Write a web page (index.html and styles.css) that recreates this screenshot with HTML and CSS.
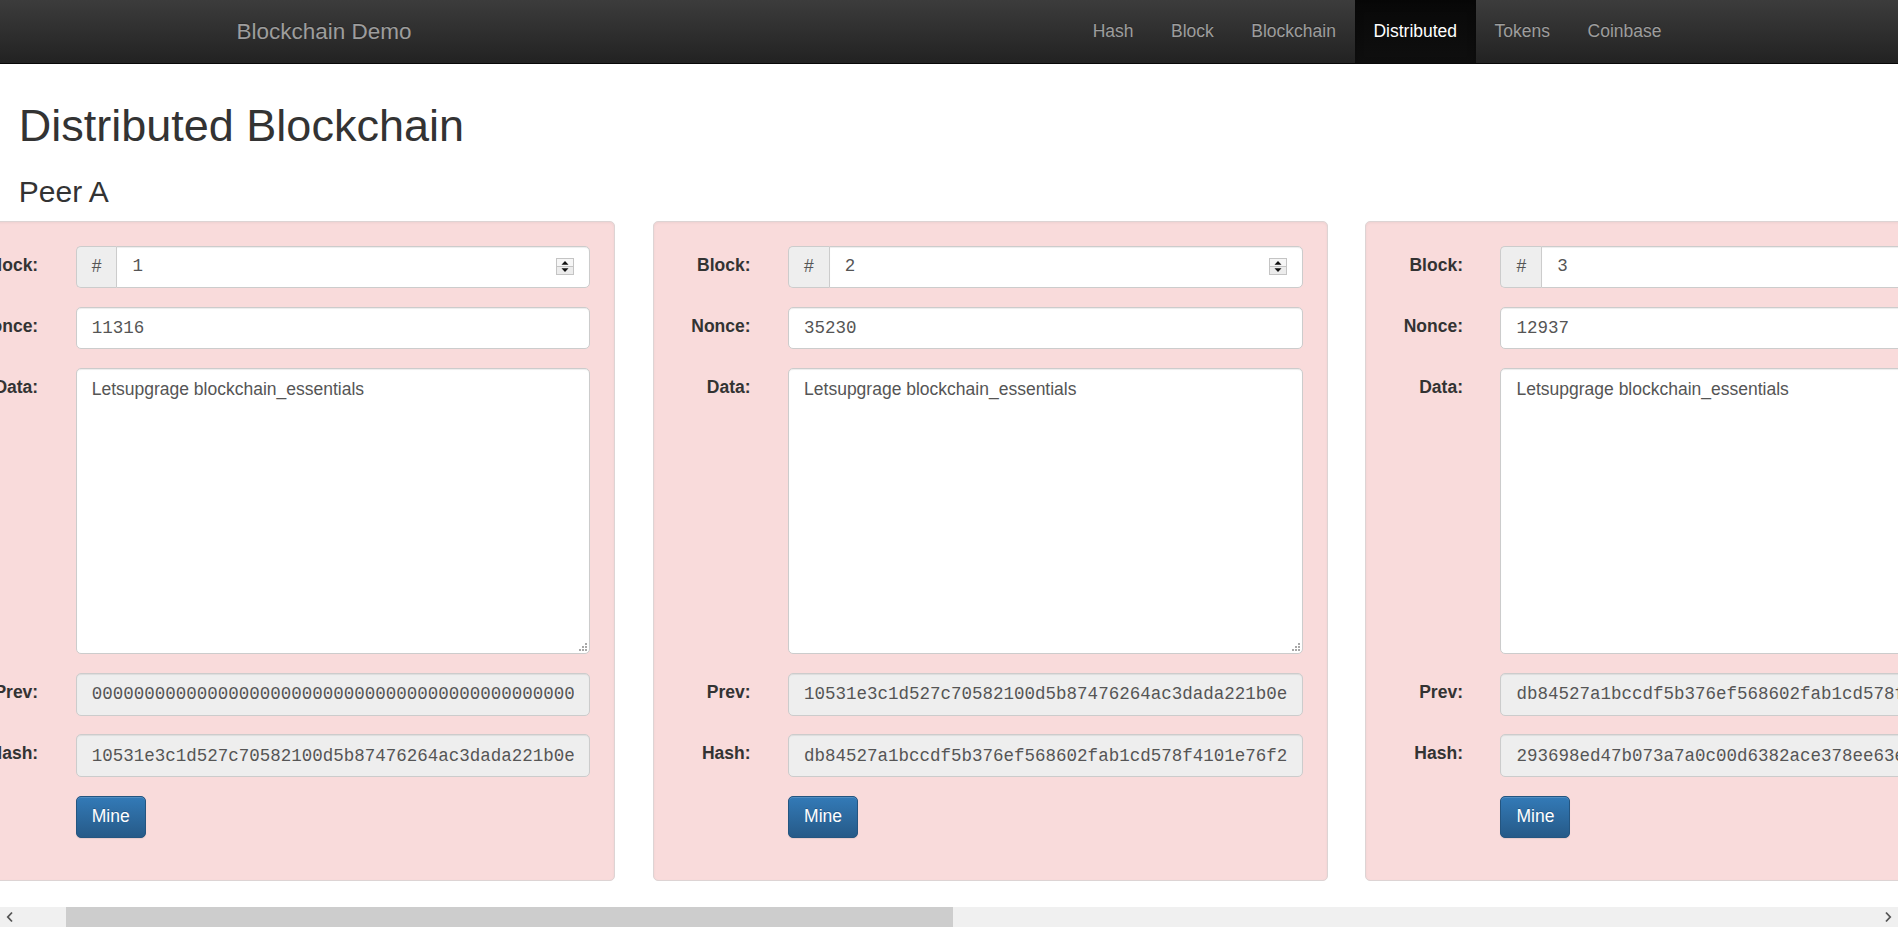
FILE: index.html
```html
<!DOCTYPE html>
<html lang="en">
<head>
<meta charset="utf-8">
<title>Blockchain Demo: Distributed</title>
<link rel="stylesheet" href="styles.css">
</head>
<body>
<nav class="navbar">
  <div class="navbar-inner">
    <a class="brand" href="#">Blockchain Demo</a>
    <ul class="nav">
      <li><a href="#">Hash</a></li>
      <li><a href="#">Block</a></li>
      <li><a href="#">Blockchain</a></li>
      <li class="active"><a href="#">Distributed</a></li>
      <li><a href="#">Tokens</a></li>
      <li><a href="#">Coinbase</a></li>
    </ul>
  </div>
</nav>

<main class="page">
  <h1 class="title">Distributed Blockchain</h1>
  <h3 class="peer-title">Peer A</h3>

  <div class="chain">
    <div class="chain-track">

      <div class="block-col">
        <div class="well">
          <form class="block-form">
            <div class="field">
              <label>Block:</label>
              <div class="input-group">
                <span class="addon">#</span>
                <div class="num-field">
                  <input class="num-input" type="number" value="1">
                  <svg class="spin" width="18" height="17" viewBox="0 0 18 17"><rect x="0.5" y="0.5" width="17" height="16" fill="#ececec" stroke="#c4c4c4"/><rect x="1" y="1" width="16" height="7" fill="#f6f6f6"/><line x1="1" y1="8.5" x2="17" y2="8.5" stroke="#c4c4c4"/><path d="M9 3 L12.5 6.8 H5.5 Z" fill="#111"/><path d="M9 14 L12.5 10.2 H5.5 Z" fill="#111"/></svg>
                </div>
              </div>
            </div>
            <div class="field">
              <label>Nonce:</label>
              <input class="control" type="text" value="11316">
            </div>
            <div class="field">
              <label>Data:</label>
              <div class="data-wrap">
                <textarea class="control data" rows="10">Letsupgrage blockchain_essentials</textarea>
                <svg class="grip" width="9" height="9" viewBox="0 0 9 9"><rect x="7" y="1" width="2" height="2" fill="#a8a8a8"/><rect x="4" y="4" width="2" height="2" fill="#a8a8a8"/><rect x="7" y="4" width="2" height="2" fill="#a8a8a8"/><rect x="1" y="7" width="2" height="2" fill="#a8a8a8"/><rect x="4" y="7" width="2" height="2" fill="#a8a8a8"/><rect x="7" y="7" width="2" height="2" fill="#a8a8a8"/></svg>
              </div>
            </div>
            <div class="field">
              <label>Prev:</label>
              <input class="control" type="text" readonly value="0000000000000000000000000000000000000000000000000000000000000000">
            </div>
            <div class="field">
              <label>Hash:</label>
              <input class="control" type="text" readonly value="10531e3c1d527c70582100d5b87476264ac3dada221b0e">
            </div>
            <div class="field">
              <div class="actions"><button class="btn" type="button">Mine</button></div>
            </div>
          </form>
        </div>
      </div>

      <div class="block-col">
        <div class="well">
          <form class="block-form">
            <div class="field">
              <label>Block:</label>
              <div class="input-group">
                <span class="addon">#</span>
                <div class="num-field">
                  <input class="num-input" type="number" value="2">
                  <svg class="spin" width="18" height="17" viewBox="0 0 18 17"><rect x="0.5" y="0.5" width="17" height="16" fill="#ececec" stroke="#c4c4c4"/><rect x="1" y="1" width="16" height="7" fill="#f6f6f6"/><line x1="1" y1="8.5" x2="17" y2="8.5" stroke="#c4c4c4"/><path d="M9 3 L12.5 6.8 H5.5 Z" fill="#111"/><path d="M9 14 L12.5 10.2 H5.5 Z" fill="#111"/></svg>
                </div>
              </div>
            </div>
            <div class="field">
              <label>Nonce:</label>
              <input class="control" type="text" value="35230">
            </div>
            <div class="field">
              <label>Data:</label>
              <div class="data-wrap">
                <textarea class="control data" rows="10">Letsupgrage blockchain_essentials</textarea>
                <svg class="grip" width="9" height="9" viewBox="0 0 9 9"><rect x="7" y="1" width="2" height="2" fill="#a8a8a8"/><rect x="4" y="4" width="2" height="2" fill="#a8a8a8"/><rect x="7" y="4" width="2" height="2" fill="#a8a8a8"/><rect x="1" y="7" width="2" height="2" fill="#a8a8a8"/><rect x="4" y="7" width="2" height="2" fill="#a8a8a8"/><rect x="7" y="7" width="2" height="2" fill="#a8a8a8"/></svg>
              </div>
            </div>
            <div class="field">
              <label>Prev:</label>
              <input class="control" type="text" readonly value="10531e3c1d527c70582100d5b87476264ac3dada221b0e">
            </div>
            <div class="field">
              <label>Hash:</label>
              <input class="control" type="text" readonly value="db84527a1bccdf5b376ef568602fab1cd578f4101e76f2">
            </div>
            <div class="field">
              <div class="actions"><button class="btn" type="button">Mine</button></div>
            </div>
          </form>
        </div>
      </div>

      <div class="block-col">
        <div class="well">
          <form class="block-form">
            <div class="field">
              <label>Block:</label>
              <div class="input-group">
                <span class="addon">#</span>
                <div class="num-field">
                  <input class="num-input" type="number" value="3">
                  <svg class="spin" width="18" height="17" viewBox="0 0 18 17"><rect x="0.5" y="0.5" width="17" height="16" fill="#ececec" stroke="#c4c4c4"/><rect x="1" y="1" width="16" height="7" fill="#f6f6f6"/><line x1="1" y1="8.5" x2="17" y2="8.5" stroke="#c4c4c4"/><path d="M9 3 L12.5 6.8 H5.5 Z" fill="#111"/><path d="M9 14 L12.5 10.2 H5.5 Z" fill="#111"/></svg>
                </div>
              </div>
            </div>
            <div class="field">
              <label>Nonce:</label>
              <input class="control" type="text" value="12937">
            </div>
            <div class="field">
              <label>Data:</label>
              <div class="data-wrap">
                <textarea class="control data" rows="10">Letsupgrage blockchain_essentials</textarea>
                <svg class="grip" width="9" height="9" viewBox="0 0 9 9"><rect x="7" y="1" width="2" height="2" fill="#a8a8a8"/><rect x="4" y="4" width="2" height="2" fill="#a8a8a8"/><rect x="7" y="4" width="2" height="2" fill="#a8a8a8"/><rect x="1" y="7" width="2" height="2" fill="#a8a8a8"/><rect x="4" y="7" width="2" height="2" fill="#a8a8a8"/><rect x="7" y="7" width="2" height="2" fill="#a8a8a8"/></svg>
              </div>
            </div>
            <div class="field">
              <label>Prev:</label>
              <input class="control" type="text" readonly value="db84527a1bccdf5b376ef568602fab1cd578f4101e76f2">
            </div>
            <div class="field">
              <label>Hash:</label>
              <input class="control" type="text" readonly value="293698ed47b073a7a0c00d6382ace378ee63e">
            </div>
            <div class="field">
              <div class="actions"><button class="btn" type="button">Mine</button></div>
            </div>
          </form>
        </div>
      </div>

    </div>
  </div>

  <div class="scrollbar" aria-hidden="true">
    <span class="sb-btn"><svg width="20" height="20" viewBox="0 0 20 20"><path d="M12 5.5 L7.8 10 L12 14.5" fill="none" stroke="#555" stroke-width="1.8"/></svg></span>
    <div class="sb-track"><div class="sb-thumb"></div></div>
    <span class="sb-btn"><svg width="20" height="20" viewBox="0 0 20 20"><path d="M8 5.5 L12.2 10 L8 14.5" fill="none" stroke="#555" stroke-width="1.8"/></svg></span>
  </div>
</main>
<script src="script.js"></script>
</body>
</html>
```

FILE: styles.css
```css
* {
  box-sizing: border-box;
}

html,
body {
  margin: 0;
  padding: 0;
}

body {
  font-family: "Liberation Sans", Arial, Helvetica, sans-serif;
  font-size: 17.5px;
  line-height: 25px;
  color: #333;
  background: #fff;
}

/* ---------- navbar ---------- */
.navbar {
  height: 63.5px;
  background-color: #222;
  background-image: linear-gradient(to bottom, #3c3c3c 0%, #222 100%);
  border-bottom: 1px solid #080808;
}

.navbar-inner {
  width: 1462.5px;
  height: 62.5px;
  margin: 0 auto;
  padding: 0 18.75px;
  display: flex;
  justify-content: space-between;
}

.brand {
  display: block;
  height: 62.5px;
  margin-left: -18.75px;
  padding: 18.75px;
  font-size: 22.5px;
  line-height: 25px;
  color: #9d9d9d;
  text-decoration: none;
  text-shadow: 0 -1px 0 rgba(0, 0, 0, 0.25);
}

.nav {
  display: flex;
  list-style: none;
  margin: 0 -18.75px 0 0;
  padding: 0;
}

.nav a {
  display: block;
  height: 62.5px;
  padding: 18.75px;
  line-height: 25px;
  color: #9d9d9d;
  text-decoration: none;
  text-shadow: 0 -1px 0 rgba(0, 0, 0, 0.25);
}

.nav .active a {
  color: #fff;
  background-image: linear-gradient(to bottom, #080808 0%, #0f0f0f 100%);
  box-shadow: inset 0 3px 9px rgba(0, 0, 0, 0.25);
}

/* ---------- page ---------- */
.page {
  padding: 12px 18.75px 0;
}

.title {
  margin: 25px 0 12.5px;
  font-size: 45px;
  line-height: 1.1;
  font-weight: 500;
}

.peer-title {
  margin: 25px 0 12.5px;
  font-size: 30px;
  line-height: 1.1;
  font-weight: 500;
}

/* ---------- horizontal chain ---------- */
.chain {
  margin: 0 -18.75px;
  overflow-x: auto;
  overflow-y: hidden;
  scrollbar-width: none;
}

.chain::-webkit-scrollbar {
  display: none;
}

.chain-track {
  display: flex;
  width: max-content;
  padding: 0 20.65px;
}

.block-col {
  flex: 0 0 712.4px;
  padding: 0 18.75px;
}

.well {
  margin-bottom: 26px;
  padding: 24px;
  background-color: #f9dbdb;
  border: 1px solid #ddd4d4;
  border-radius: 5px;
  box-shadow: inset 0 1px 3px rgba(0, 0, 0, 0.05), 0 1px 0 rgba(255, 255, 255, 0.1);
}

.block-form {
  margin: 0;
}

.field {
  display: grid;
  grid-template-columns: 72.8px minmax(0, 1fr);
  column-gap: 37.5px;
  margin-bottom: 18.75px;
}

.field label {
  padding-top: 7px;
  font-weight: bold;
  text-align: right;
  line-height: 25px;
}

.actions {
  grid-column: 2;
}

.control {
  display: block;
  width: 100%;
  height: 42.5px;
  margin: 0;
  padding: 7.5px 15px;
  font-family: "Liberation Mono", "Courier New", monospace;
  font-size: 17.5px;
  line-height: 25px;
  color: #555;
  background: #fff;
  border: 1px solid #ccc;
  border-radius: 5px;
  box-shadow: inset 0 1px 1px rgba(0, 0, 0, 0.075);
  outline: none;
}

.control[readonly] {
  background: #eee;
}

.data-wrap {
  position: relative;
}

.control.data {
  height: 286.3px;
  font-family: "Liberation Sans", Arial, Helvetica, sans-serif;
  resize: none;
  overflow: hidden;
}

.grip {
  position: absolute;
  right: 3px;
  bottom: 3px;
}

.input-group {
  display: flex;
}

.addon {
  flex: none;
  height: 42.5px;
  padding: 7.5px 15px;
  font-size: 17.5px;
  line-height: 25px;
  color: #555;
  text-align: center;
  background: #eee;
  border: 1px solid #ccc;
  border-right: 0;
  border-radius: 5px 0 0 5px;
}

.num-field {
  flex: 1;
  min-width: 0;
  display: flex;
  align-items: center;
  height: 42.5px;
  padding: 0 15px;
  background: #fff;
  border: 1px solid #ccc;
  border-radius: 0 5px 5px 0;
  box-shadow: inset 0 1px 1px rgba(0, 0, 0, 0.075);
}

.num-input {
  flex: 1;
  min-width: 0;
  margin: 0;
  padding: 0;
  border: 0;
  background: transparent;
  font-family: "Liberation Mono", "Courier New", monospace;
  font-size: 17.5px;
  line-height: 25px;
  color: #555;
  outline: none;
  -moz-appearance: textfield;
}

.num-input::-webkit-inner-spin-button,
.num-input::-webkit-outer-spin-button {
  -webkit-appearance: none;
  margin: 0;
}

.spin {
  flex: none;
  display: block;
}

.btn {
  display: inline-block;
  margin: 0;
  padding: 7.5px 15px;
  font-family: "Liberation Sans", Arial, Helvetica, sans-serif;
  font-size: 17.5px;
  line-height: 25px;
  color: #fff;
  background-color: #265a88;
  background-image: linear-gradient(to bottom, #337ab7 0%, #265a88 100%);
  border: 1px solid #245580;
  border-radius: 5px;
  text-shadow: 0 -1px 0 rgba(0, 0, 0, 0.2);
  box-shadow: inset 0 1px 0 rgba(255, 255, 255, 0.15), 0 1px 1px rgba(0, 0, 0, 0.075);
  cursor: pointer;
}

/* ---------- scrollbar of the chain ---------- */
.scrollbar {
  display: flex;
  height: 20px;
  margin: 0 -18.75px;
  background: #f0f0f0;
}

.sb-btn {
  flex: none;
  width: 20px;
  height: 20px;
}

.sb-btn svg {
  display: block;
}

.sb-track {
  flex: 1;
  min-width: 0;
}

.sb-thumb {
  width: 887px;
  height: 20px;
  margin-left: 46px;
  background: #cdcdcd;
}
```

FILE: script.js
```js
document.querySelector('.chain').scrollLeft = 99;
```
